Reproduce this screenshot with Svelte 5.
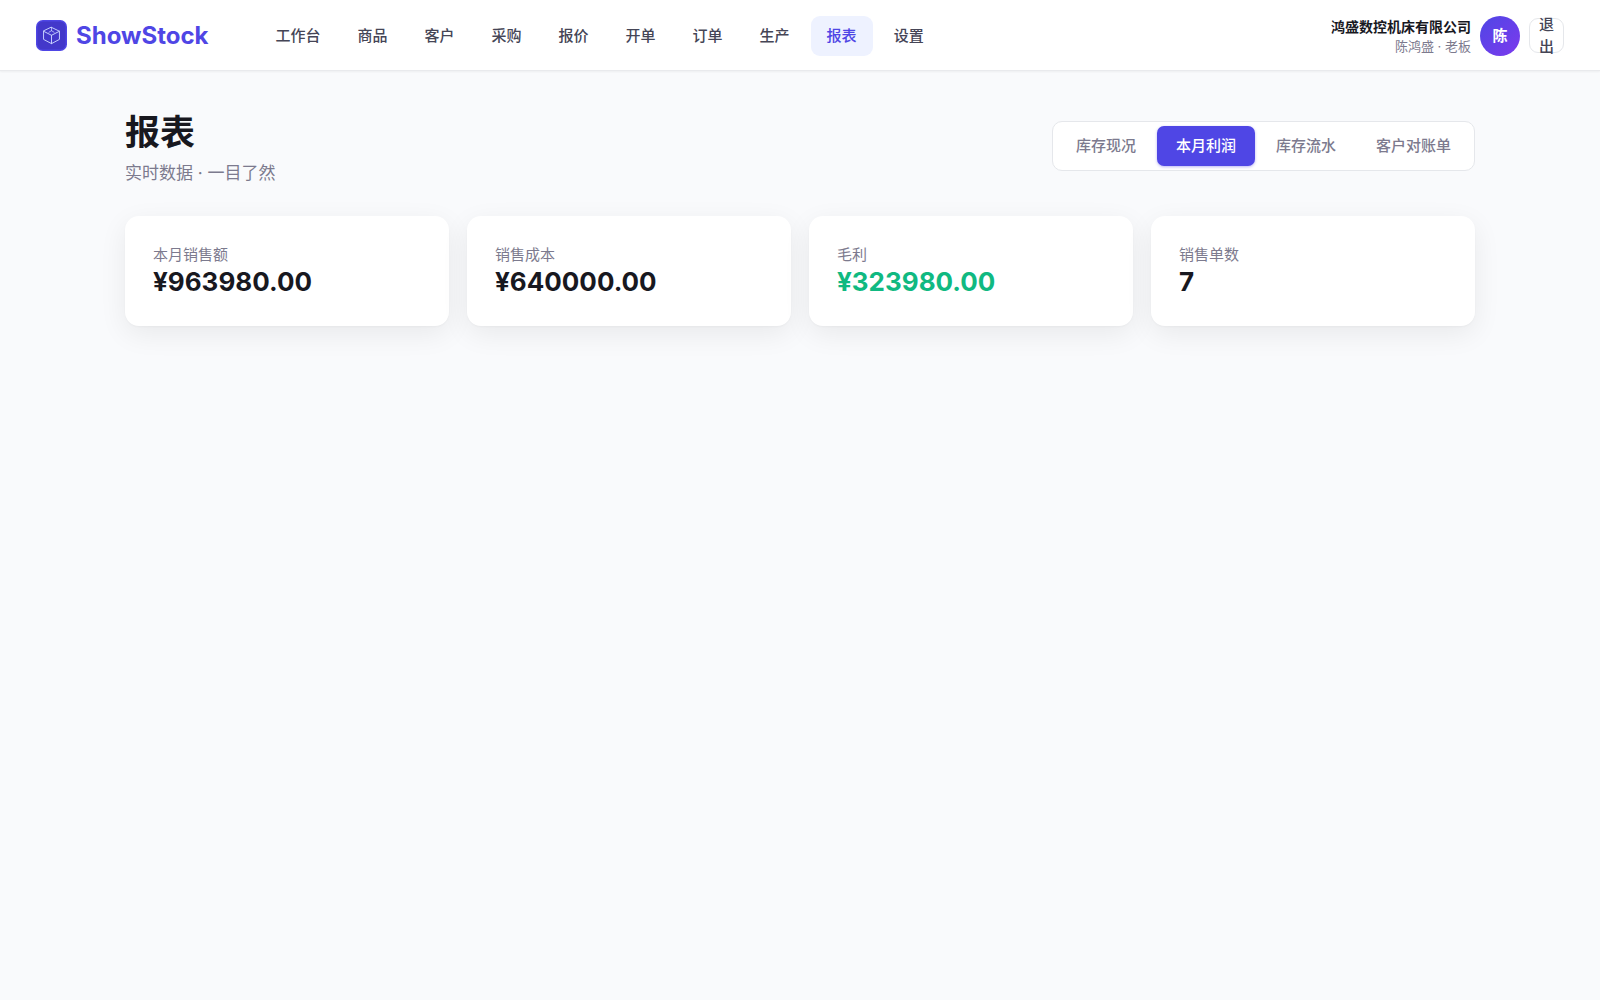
<script lang="ts">
  type Stat = { label: string; value: string; tone?: 'good' };

  const navItems = ['工作台', '商品', '客户', '采购', '报价', '开单', '订单', '生产', '报表', '设置'];
  const tabs = ['库存现况', '本月利润', '库存流水', '客户对账单'];

  const stats: Stat[] = [
    { label: '本月销售额', value: '¥963980.00' },
    { label: '销售成本', value: '¥640000.00' },
    { label: '毛利', value: '¥323980.00', tone: 'good' },
    { label: '销售单数', value: '7' }
  ];

  let activeNav = $state('报表');
  let activeTab = $state('本月利润');
</script>

<header class="topbar">
  <a class="brand" href="#home">
    <svg class="brand-logo" viewBox="0 0 32 32" width="31" height="31" aria-hidden="true">
      <rect width="32" height="32" rx="7" fill="#4f46e5" />
      <rect x="1.5" y="1.5" width="29" height="29" rx="5.5" fill="#4338ca" />
      <g fill="none" stroke="#c7d2fe" stroke-linejoin="round" stroke-linecap="round">
        <path d="M16 7.6l8.2 4v8.4L16 24.4 7.8 20v-8.4z" />
        <path d="M7.8 11.6l8.2 4.2 8.2-4.2M16 15.8v8.6" />
        <path d="M13.4 12.6L16 11l2.6 1.6M16 7.6V11" stroke-width="0.8" />
      </g>
    </svg>
    <span class="brand-name">ShowStock</span>
  </a>

  <nav class="nav">
    {#each navItems as item}
      <a
        class="nav-link"
        class:active={item === activeNav}
        href="#{item}"
        onclick={() => (activeNav = item)}
      >{item}</a>
    {/each}
  </nav>

  <div class="user">
    <div class="user-info">
      <div class="company">鸿盛数控机床有限公司</div>
      <div class="role">陈鸿盛 · 老板</div>
    </div>
    <div class="avatar">陈</div>
    <button class="logout" type="button">退出</button>
  </div>
</header>

<main class="page">
  <div class="page-head">
    <div>
      <h1>报表</h1>
      <p class="subtitle">实时数据 · 一目了然</p>
    </div>
    <div class="tabs" role="tablist">
      {#each tabs as tab}
        <button
          class="tab"
          class:active={tab === activeTab}
          type="button"
          role="tab"
          aria-selected={tab === activeTab}
          onclick={() => (activeTab = tab)}
        >{tab}</button>
      {/each}
    </div>
  </div>

  <section class="stats">
    {#each stats as stat}
      <div class="card">
        <div class="stat-label">{stat.label}</div>
        <div class="stat-value" class:good={stat.tone === 'good'}>{stat.value}</div>
      </div>
    {/each}
  </section>
</main>

<style>
  :global(body) {
    margin: 0;
    background: #f9fafc;
    color: #18181f;
    font-family: Inter, "Noto Sans CJK SC", sans-serif;
    font-size: 15px;
    line-height: 22px;
  }

  .topbar {
    display: flex;
    align-items: center;
    box-sizing: border-box;
    height: 71px;
    padding: 1px 36px 0;
    background: #fff;
    border-bottom: 1px solid #e9eaed;
    box-shadow: 0 1px 2px rgba(0, 0, 0, 0.05);
  }

  .brand {
    display: flex;
    align-items: center;
    gap: 9px;
    color: #4f46e5;
    text-decoration: none;
  }

  .brand-name {
    font-size: 24px;
    font-weight: 700;
    line-height: 36px;
  }

  .nav {
    display: flex;
    gap: 5px;
    margin-left: 51px;
  }

  .nav-link {
    padding: 9px 16px;
    border-radius: 9px;
    color: #454556;
    font-weight: 500;
    text-decoration: none;
    white-space: nowrap;
  }

  .nav-link.active {
    background: #eef2ff;
    color: #4f46e5;
  }

  .user {
    display: flex;
    align-items: center;
    gap: 9px;
    margin-left: auto;
  }

  .user-info {
    text-align: right;
  }

  .company {
    font-size: 14px;
    font-weight: 600;
    line-height: 20px;
  }

  .role {
    color: #7c7a8e;
    font-size: 13px;
    line-height: 18px;
  }

  .avatar {
    display: flex;
    align-items: center;
    justify-content: center;
    width: 40px;
    height: 40px;
    border-radius: 50%;
    background: linear-gradient(135deg, #4f46e5, #7c3aed);
    color: #fff;
    font-weight: 600;
  }

  .logout {
    display: flex;
    align-items: center;
    justify-content: center;
    width: 35px;
    height: 35px;
    padding: 0 9px;
    border: 1px solid #e5e7eb;
    border-radius: 9px;
    background: #fff;
    color: #454556;
    font: inherit;
    font-weight: 500;
    cursor: pointer;
  }

  .page {
    max-width: 1350px;
    margin: 0 auto;
    padding: 35px 24px;
  }

  .page-head {
    display: flex;
    align-items: center;
    justify-content: space-between;
    margin-bottom: 31px;
  }

  h1 {
    margin: 0;
    font-size: 35px;
    font-weight: 600;
    line-height: 53px;
  }

  .subtitle {
    margin: 2px 0 0;
    color: #7c7a8e;
    font-size: 17px;
    line-height: 24px;
  }

  .tabs {
    display: flex;
    gap: 2px;
    padding: 4px;
    border: 1px solid #e5e7eb;
    border-radius: 10px;
    background: #fff;
  }

  .tab {
    padding: 9px 19px;
    border: none;
    border-radius: 7px;
    background: transparent;
    color: #7c7a8e;
    font: inherit;
    font-weight: 500;
    white-space: nowrap;
    cursor: pointer;
  }

  .tab.active {
    background: #4f46e5;
    color: #fff;
    box-shadow: 0 1px 3px rgba(79, 70, 229, 0.4);
  }

  .stats {
    display: grid;
    grid-template-columns: repeat(4, 1fr);
    gap: 18px;
  }

  .card {
    padding: 28px;
    border-radius: 14px;
    background: #fff;
    box-shadow: 0 1px 2px rgba(0, 0, 0, 0.03), 0 8px 28px rgba(0, 0, 0, 0.07);
  }

  .stat-label {
    color: #7c7a8e;
    line-height: 22px;
  }

  .stat-value {
    font-size: 26px;
    font-weight: 700;
    line-height: 32px;
  }

  .stat-value.good {
    color: #10b981;
  }
</style>
